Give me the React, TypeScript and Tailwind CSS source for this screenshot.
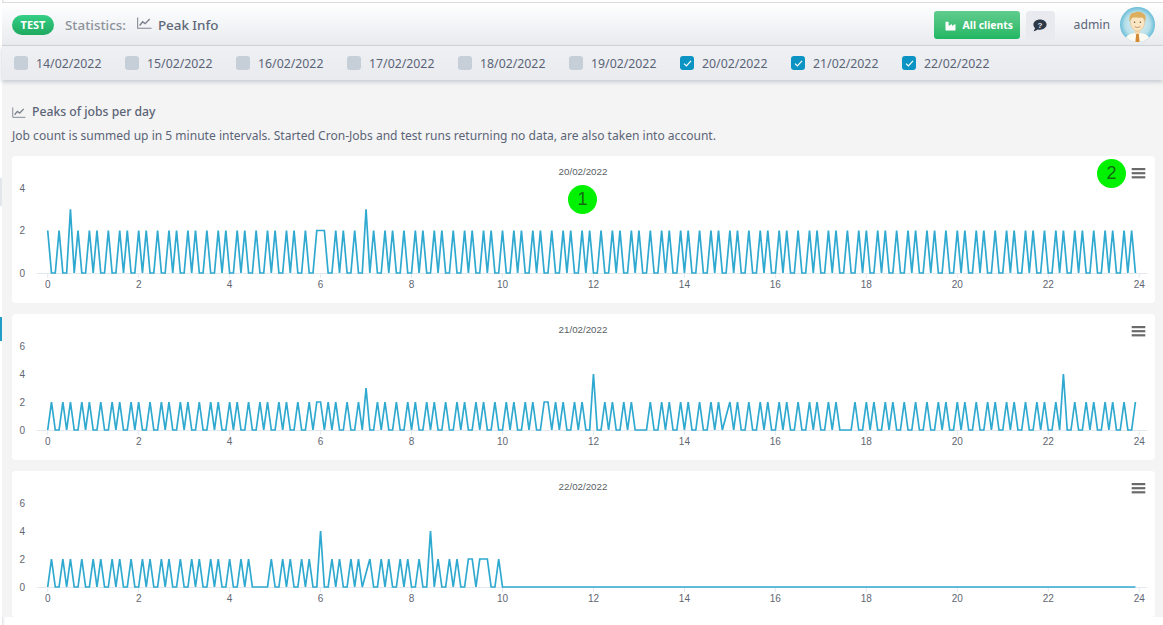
import { FaIndustry } from "react-icons/fa";

const DAYS = [
  { label: "14/02/2022", checked: false },
  { label: "15/02/2022", checked: false },
  { label: "16/02/2022", checked: false },
  { label: "17/02/2022", checked: false },
  { label: "18/02/2022", checked: false },
  { label: "19/02/2022", checked: false },
  { label: "20/02/2022", checked: true },
  { label: "21/02/2022", checked: true },
  { label: "22/02/2022", checked: true },
];

const POINTS = 288;
const OFFSETS = [0, 3, 5, 8, 10];

// peaks come in a 65 minute rhythm, start..end in 5 minute slots
function rhythm(from: number, to: number): number[] {
  const out: number[] = [];
  for (let i = from; i <= to; i++) {
    if (OFFSETS.includes((i - from) % 13)) out.push(i);
  }
  return out;
}

function series(peaks: number[], extra: Record<number, number>): number[] {
  const data = new Array(POINTS).fill(0);
  peaks.forEach(i => { data[i] = 2; });
  Object.entries(extra).forEach(([i, v]) => { data[Number(i)] = v; });
  return data;
}

const DATA_20 = series([0, ...rhythm(3, 287)], { 72: 2, 6: 3, 84: 3, 287: 0 });
const DATA_21 = series(
  [...rhythm(1, 154), ...rhythm(159, 208), ...rhythm(213, 229), ...rhythm(232, 287)],
  { 72: 2, 84: 3, 132: 2, 144: 4, 268: 4, 179: 1 },
);
const DATA_22 = series(
  [1, 4, 6, 9, 12, 14, 17, 19, 22, 25, 27, 30, 32, 35, 38, 40, 43, 45, 48, 51, 53,
    59, 62, 64, 67, 69, 75, 77, 80, 82, 85, 88, 90, 93, 95, 98, 103, 106, 108,
    111, 112, 114, 115, 116, 119],
  { 72: 4, 101: 4, 84: 1 },
);

const X0 = 35.7;
const STEP = 3.79;

function PeakChart({ title, data, yMax, unit, height, baseline, marker }: {
  title: string; data: number[]; yMax: number; unit: number; height: number; baseline: number;
  marker?: React.ReactNode;
}) {
  const line = data.map((v, i) => `${(X0 + i * STEP).toFixed(2)},${(baseline - v * unit).toFixed(2)}`).join(" ");
  const yTicks: number[] = [];
  for (let v = 0; v <= yMax; v += 2) yTicks.push(v);
  const xTicks: number[] = [];
  for (let h = 0; h <= 24; h += 2) xTicks.push(h);

  return (
    <div className="relative rounded bg-white" style={{ height }}>
      <svg width="1143" height={height} className="block font-['Liberation_Sans',sans-serif]">
        <text x="571" y="19" textAnchor="middle" fontSize="9.75" fill="#5a5f66">{title}</text>
        {yTicks.map(v => (
          <text key={v} x="13" y={baseline - v * unit + 3.5} fontSize="10" fill="#5f6672" textAnchor="end">{v}</text>
        ))}
        <line x1="25" x2="1135" y1={baseline + 0.5} y2={baseline + 0.5} stroke="#e3e8ef" />
        {xTicks.map(h => {
          const x = X0 + h * 12 * STEP;
          return (
            <g key={h}>
              <line x1={x} x2={x} y1={baseline} y2={baseline + 5} stroke="#e3e8ef" />
              <text x={x} y={baseline + 14.5} fontSize="10" fill="#5f6672" textAnchor="middle">{h}</text>
            </g>
          );
        })}
        <polyline points={line} fill="none" stroke="#2fa9cf" strokeWidth="1.7" strokeLinejoin="miter" />
        <g fill="#6a6a6a">
          <rect x="1119.7" y="12" width="13.6" height="2.2" />
          <rect x="1119.7" y="16.1" width="13.6" height="2.2" />
          <rect x="1119.7" y="20.2" width="13.6" height="2.2" />
        </g>
      </svg>
      {marker}
    </div>
  );
}

function Marker({ n, className }: { n: number; className: string }) {
  return (
    <div className={`absolute flex h-[29px] w-[29px] items-center justify-center rounded-full bg-[#00f200] font-['Liberation_Sans',sans-serif] text-[18px] text-[#146b14] ${className}`}>
      {n}
    </div>
  );
}

function LineIcon({ className }: { className: string }) {
  return (
    <svg viewBox="0 0 16 13" className={className} fill="none" stroke="#7d8490" strokeWidth="1.1">
      <path d="M0.6 0.5V12.2H15.6" />
      <path d="M2.8 9.2L6 5.2L8.8 7.2L13.6 2.2" strokeWidth="1.6" />
    </svg>
  );
}

function Avatar() {
  return (
    <svg viewBox="0 0 35 35" className="h-[35px] w-[35px]">
      <defs>
        <radialGradient id="sky" cx="50%" cy="50%" r="55%">
          <stop offset="0%" stopColor="#e4f2f5" />
          <stop offset="65%" stopColor="#b5dfe9" />
          <stop offset="100%" stopColor="#4eb0d2" />
        </radialGradient>
        <clipPath id="round"><circle cx="17.5" cy="17.5" r="17.5" /></clipPath>
      </defs>
      <circle cx="17.5" cy="17.5" r="17.5" fill="url(#sky)" />
      <g clipPath="url(#round)">
        <path d="M5 35C5 28 10 26 17.5 26S30 28 30 35Z" fill="#fdfaf2" />
        <path d="M16.2 27L18.8 27L19.6 35H15.4Z" fill="#d3892f" />
        <rect x="15" y="21" width="5" height="6" fill="#f5d9ae" />
        <ellipse cx="17.5" cy="15.5" rx="7" ry="8.6" fill="#fbe6c4" stroke="#d8b27a" strokeWidth="0.5" />
        <path d="M9.6 15C8.6 8 12 5 14 6C16 3.6 24 4.6 25.4 9C26 11 25.6 13.6 25.2 15C24.6 12 23.6 10.6 22 10.4C18 11 14 10.2 12 11C10.8 12 10.2 13.4 9.6 15Z" fill="#dcae5e" />
        <circle cx="14.6" cy="15.2" r="0.7" fill="#5b4a33" />
        <circle cx="20.4" cy="15.2" r="0.7" fill="#5b4a33" />
        <path d="M14.6 19.4C16 20.8 19 20.8 20.4 19.4" fill="none" stroke="#b5793f" strokeWidth="0.7" />
      </g>
    </svg>
  );
}

export default function App() {
  return (
    <div className="flex h-[625px] w-[1163px] overflow-hidden bg-white font-['Noto_Sans',sans-serif]">
      {/* what is left of the sidebar behind the page */}
      <div className="flex w-[2px] shrink-0 flex-col bg-white">
        <div className="mt-[178px] h-[28px] bg-[#e3e7ec]" />
        <div className="mt-[111px] h-[24px] bg-[#1f9cc8]" />
      </div>

      <div className="min-w-0 flex-1 pt-[2px] shadow-[inset_3px_0_3px_-2px_#d5d8de]">
        <div className="h-px bg-[#dcdcdc]" />
        <header className="flex h-[43px] items-center justify-between border-b border-[#cfd3da] bg-gradient-to-b from-white to-[#e8eaee] pl-[10px] pr-[8px] pt-[2px]">
          <div className="flex items-center">
            <span className="flex h-[20px] w-[42px] items-center justify-center rounded-full bg-gradient-to-b from-[#34cf85] to-[#1fa95f] text-[11px] font-bold text-white">TEST</span>
            <span className="ml-[11px] text-[13.4px] font-medium text-[#8d929b]">Statistics:</span>
            <LineIcon className="ml-[11px] mb-[3px] h-[12px] w-[15px]" />
            <span className="ml-[6px] text-[13.4px] font-medium text-[#5f6877]">Peak Info</span>
          </div>
          <div className="flex items-center">
            <button className="flex h-[28px] w-[86px] items-center gap-[7px] rounded-[3px] bg-gradient-to-b from-[#5fcc8e] to-[#1eb763] pl-[11px] pt-[1px] text-[10.4px] font-bold text-white">
              <FaIndustry className="h-[10px] w-[11px] shrink-0" />
              All clients
            </button>
            <button className="ml-[6px] flex h-[29px] w-[29px] items-center justify-center rounded bg-[#e8eaef]">
              <svg viewBox="0 0 14 13" className="h-[13px] w-[14px]">
                <path d="M7 0.5C3.2 0.5 0.4 2.8 0.4 5.6C0.4 7 1 8.1 2 9C1.8 10.2 1.1 11.3 0.6 12.2C2.3 11.9 3.8 11.2 4.8 10.4C5.5 10.6 6.2 10.7 7 10.7C10.8 10.7 13.6 8.4 13.6 5.6C13.6 2.8 10.8 0.5 7 0.5Z" fill="#2f3a49" />
                <text x="7" y="8.6" textAnchor="middle" fontSize="8" fontWeight="700" fill="#e8eaef" fontFamily="Liberation Sans, sans-serif">?</text>
              </svg>
            </button>
            <span className="ml-[19px] text-[12.2px] text-[#5b6477]">admin</span>
            <div className="mb-[2px] ml-[10px]"><Avatar /></div>
          </div>
        </header>

        <div className="relative z-10 flex h-[34px] items-center bg-gradient-to-b from-[#eef0f3] to-[#e9ebef] pl-[12px] pt-[2px] shadow-[0_2px_4px_#c6cad1]">
          {DAYS.map(d => (
            <label key={d.label} className="flex w-[111px] items-center">
              {d.checked ? (
                <span className="mb-[2px] flex h-[14px] w-[14px] items-center justify-center rounded-[3px] bg-[#0b93c4]">
                  <svg viewBox="0 0 10 8" className="h-[7px] w-[9px]" fill="none" stroke="white" strokeWidth="1.4"><path d="M1 4.2L3.8 6.8L9 1" /></svg>
                </span>
              ) : (
                <span className="mb-[2px] h-[14px] w-[14px] rounded-[3px] bg-[#c6ced8]" />
              )}
              <span className="ml-[8px] text-[12.3px] text-[#5b6477]">{d.label}</span>
            </label>
          ))}
        </div>

        <main className="bg-[#f4f4f4] pl-[10px] pr-[8px] pt-[23px]">
          <h2 className="flex h-[18px] items-center text-[12.2px] font-medium text-[#5b6477]">
            <LineIcon className="mr-[6px] h-[11px] w-[14px]" />
            Peaks of jobs per day
          </h2>
          <p className="mt-[6px] h-[18px] text-[12.05px] leading-[18px] text-[#5b6477]">
            Job count is summed up in 5 minute intervals. Started Cron-Jobs and test runs returning no data, are also taken into account.
          </p>
          <div className="mt-[11px] flex flex-col gap-[11px]">
            <PeakChart title="20/02/2022" data={DATA_20} yMax={4} unit={21.25} height={147} baseline={117}
              marker={<><Marker n={1} className="left-[556px] top-[29px]" /><Marker n={2} className="left-[1085px] top-[3px]" /></>} />
            <PeakChart title="21/02/2022" data={DATA_21} yMax={6} unit={14} height={146} baseline={116} />
            <PeakChart title="22/02/2022" data={DATA_22} yMax={6} unit={14} height={146} baseline={116} />
          </div>
        </main>
      </div>
    </div>
  );
}
